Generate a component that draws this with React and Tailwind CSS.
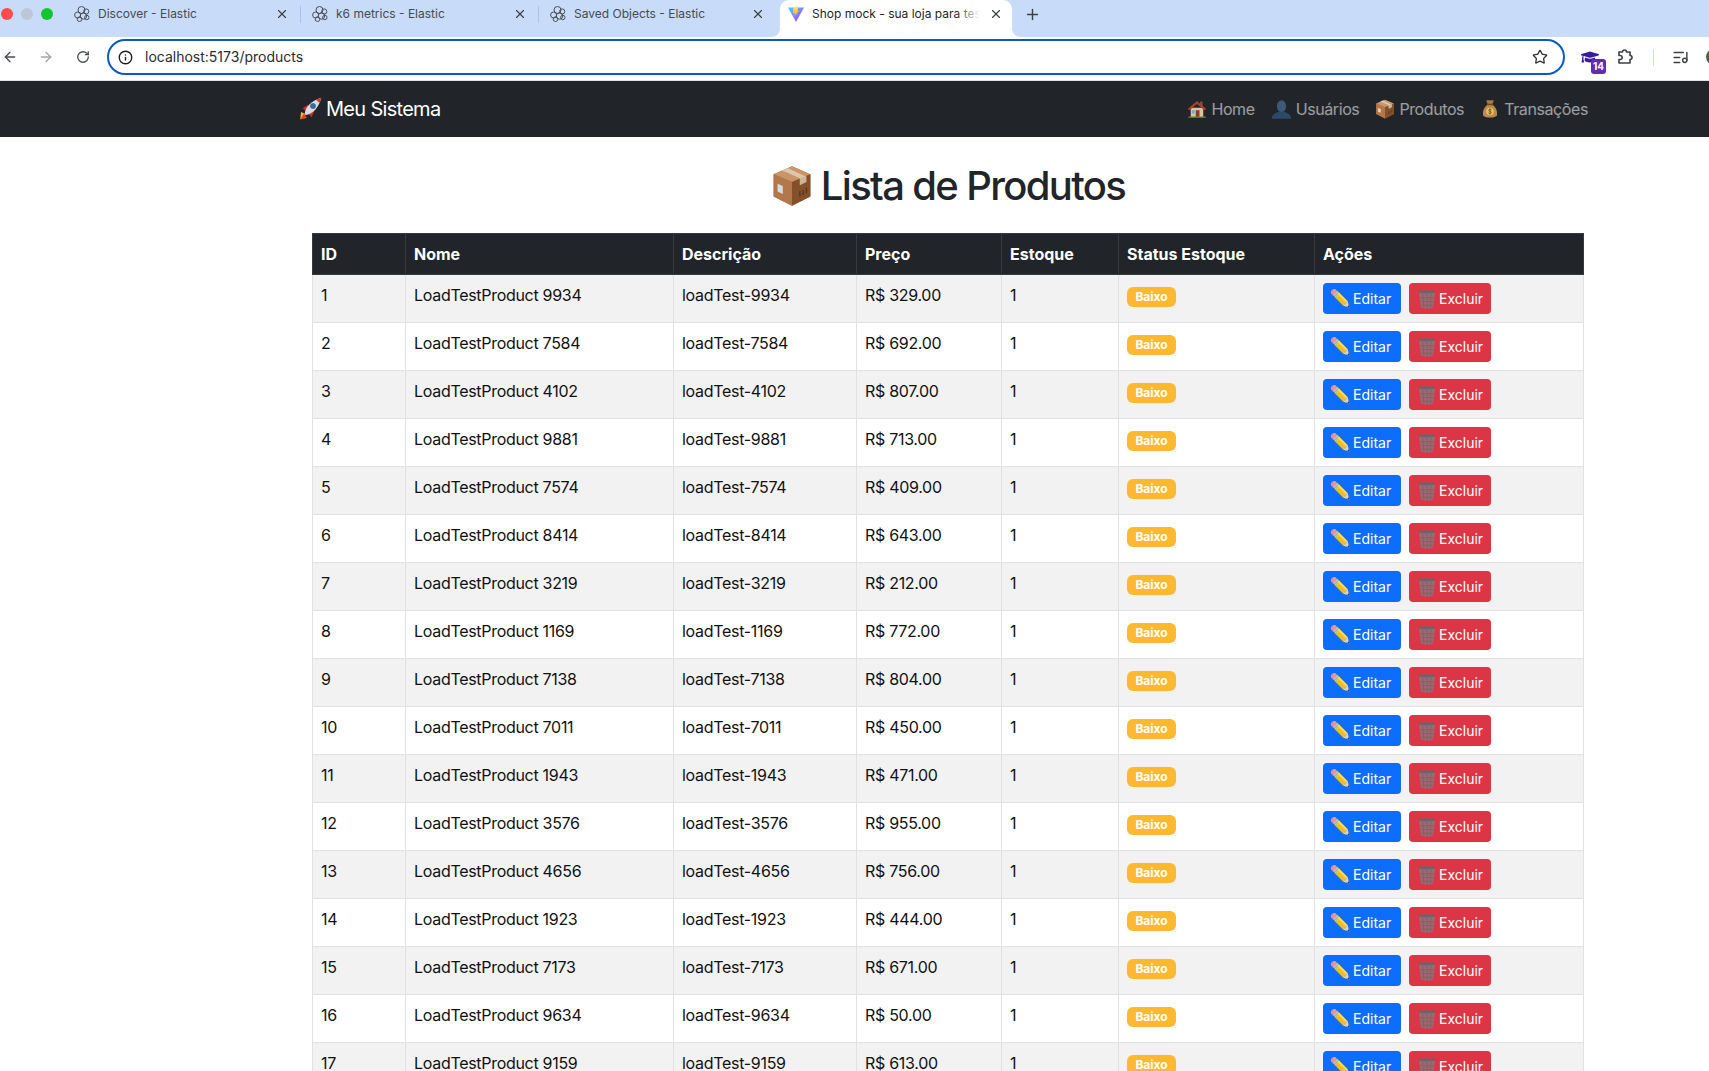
import { ArrowLeft, ArrowRight, Info, ListMusic, Plus, RotateCw, Star, X } from "lucide-react";
import { FaGraduationCap } from "react-icons/fa";

const products = [
  [1, 9934, "329.00"],
  [2, 7584, "692.00"],
  [3, 4102, "807.00"],
  [4, 9881, "713.00"],
  [5, 7574, "409.00"],
  [6, 8414, "643.00"],
  [7, 3219, "212.00"],
  [8, 1169, "772.00"],
  [9, 7138, "804.00"],
  [10, 7011, "450.00"],
  [11, 1943, "471.00"],
  [12, 3576, "955.00"],
  [13, 4656, "756.00"],
  [14, 1923, "444.00"],
  [15, 7173, "671.00"],
  [16, 9634, "50.00"],
  [17, 9159, "613.00"],
];

const headers = ["ID", "Nome", "Descrição", "Preço", "Estoque", "Status Estoque", "Ações"];

const ElasticIcon = () => (
  <svg viewBox="0 0 16 16" className="w-4 h-4 shrink-0" fill="none" stroke="#4a4f57" strokeWidth="1">
    <circle cx="7.5" cy="4" r="3.5" />
    <circle cx="12.2" cy="5.5" r="2.6" />
    <circle cx="3.6" cy="9" r="3" />
    <circle cx="9.5" cy="10" r="3.2" />
    <circle cx="5.5" cy="13.2" r="2.3" />
    <circle cx="12.8" cy="11.5" r="2.2" />
  </svg>
);

const ViteIcon = () => (
  <svg viewBox="0 0 16 16" className="w-4 h-4 shrink-0">
    <defs>
      <linearGradient id="vite-a" x1="0" y1="0" x2="1" y2="1">
        <stop offset="0" stopColor="#41d1ff" />
        <stop offset="1" stopColor="#bd34fe" />
      </linearGradient>
      <linearGradient id="vite-b" x1="0" y1="0" x2="0" y2="1">
        <stop offset="0" stopColor="#ffea83" />
        <stop offset="1" stopColor="#ffa800" />
      </linearGradient>
    </defs>
    <path d="M0 1.5 L16 1.5 L8 16 Z" fill="url(#vite-a)" />
    <path d="M10.8 0 L5.2 1.2 L5 7.5 L7 7 L6.4 10.5 L11.3 4.5 L9.3 4.9 Z" fill="url(#vite-b)" />
  </svg>
);

const PuzzleIcon = () => (
  <svg viewBox="0 0 24 24" width="19" height="19" fill="none" stroke="#3c4043" strokeWidth="2" strokeLinejoin="round" className="ml-4 shrink-0">
    <path d="M5 5h4.5a2.5 2.5 0 0 1 5 0H19v4.5a2.5 2.5 0 0 1 0 5V19H5v-4.5h1.5a2.5 2.5 0 0 0 0-5H5z" />
  </svg>
);

const RocketEmoji = () => (
  <svg viewBox="0 0 32 32" width="24" height="24" className="shrink-0 -ml-[2px]">
    <path d="M3 30 L4 20 L11 23 Z" fill="#f6b12d" />
    <path d="M3 30 L12 28 L8 22 Z" fill="#e8432e" />
    <path d="M6 15 L14 10 L12 20 Z" fill="#c9302c" />
    <path d="M18 27 L22 18 L12 20 Z" fill="#c9302c" />
    <path d="M9 22 C10 13 18 5 31 1 C28 14 20 22 11 24 Z" fill="#d4dde5" />
    <path d="M24 3.5 C26 2.5 28.5 2 31 1 C30.5 3.5 29.5 6 28.5 8 Z" fill="#d8382c" />
    <circle cx="20" cy="12" r="3.4" fill="#2c6fa8" stroke="#55606a" strokeWidth="1" />
  </svg>
);

const HouseEmoji = () => (
  <svg viewBox="0 0 32 32" width="20" height="20" className="shrink-0">
    <rect x="6" y="14" width="20" height="15" fill="#d9c39a" />
    <path d="M1 16 L16 3 L31 16 L28 18 L16 8 L4 18 Z" fill="#a5402f" />
    <rect x="21" y="4" width="4" height="7" fill="#8a4a35" />
    <rect x="14" y="18" width="6" height="11" fill="#8c3a2e" />
    <rect x="8" y="18" width="4" height="5" fill="#6fa8d6" />
    <rect x="2" y="28" width="28" height="2" fill="#5c8a3e" />
  </svg>
);

const UserEmoji = () => (
  <svg viewBox="0 0 32 32" width="21" height="21" className="shrink-0">
    <ellipse cx="16" cy="11" rx="7" ry="9" fill="#3d5a78" />
    <path d="M1 30 C2 22 9 21 12 19 L20 19 C23 21 30 22 31 30 Z" fill="#2c4a68" />
  </svg>
);

const BoxEmoji = ({ size = 20 }) => (
  <svg viewBox="0 0 32 32" width={size} height={size} className="shrink-0">
    <path d="M16 1 L30 7 L30 24 L16 31 L2 24 L2 7 Z" fill="#a5683f" />
    <path d="M16 1 L30 7 L16 13 L2 7 Z" fill="#c99467" />
    <path d="M16 13 L30 7 L30 24 L16 31 Z" fill="#84502c" />
    <path d="M2 7 L16 13 L16 31 L2 24 Z" fill="#b4774a" />
    <path d="M8 4 L22 10 L22 15 L27 9 L13 2.5 Z" fill="#dcc7a8" />
    <path d="M22 10 L27 8.5 L27 13 L22 15.5 Z" fill="#cdb595" />
    <rect x="5" y="14" width="4" height="6" fill="#d5dde0" transform="skewY(24) translate(0 -2)" />
    <path d="M22 24 L22 20 M24.5 22.8 L24.5 19 M27 21.5 L27 17.5" stroke="#56331b" strokeWidth="1" />
  </svg>
);

const MoneyEmoji = () => (
  <svg viewBox="0 0 32 32" width="20" height="20" className="shrink-0">
    <path d="M12 9 C5 14 4 22 5 26 C7 31 25 31 27 26 C28 22 27 14 20 9 Z" fill="#bc8a4e" />
    <path d="M10 2 L22 2 L20 8 L12 8 Z" fill="#a97a43" />
    <rect x="11" y="7.5" width="10" height="2.5" fill="#6d4a24" />
    <circle cx="16" cy="20" r="6" fill="#e8c15a" />
    <path d="M18.5 17.5 C17 16 13.5 16.5 14 18.5 C14.5 20.5 18.5 19.5 18 21.8 C17.5 23.5 14.5 23.5 13.5 22.2 M16 15 L16 25" stroke="#6d4a24" strokeWidth="1.3" fill="none" />
  </svg>
);

const PencilEmoji = () => (
  <svg viewBox="0 0 32 32" width="20" height="20" className="shrink-0">
    <g transform="rotate(45 16 16)">
      <rect x="-4" y="11" width="6" height="10" rx="2" fill="#f1938f" />
      <rect x="2" y="11" width="4" height="10" fill="#b8bcc2" />
      <rect x="6" y="11" width="20" height="10" fill="#f5b82e" />
      <rect x="6" y="11" width="20" height="3.5" fill="#fbd75a" />
      <path d="M26 11 L35 16 L26 21 Z" fill="#edcfa7" />
      <path d="M32 14.3 L35 16 L32 17.7 Z" fill="#333" />
    </g>
  </svg>
);

const TrashEmoji = () => (
  <svg viewBox="0 0 32 32" width="20" height="20" className="shrink-0">
    <path d="M3 5 L6 29 C8 32 24 32 26 29 L29 5 Z" fill="#9a6a70" />
    <path d="M9 8 L11 30 M16 8 L16 31 M23 8 L21 30 M5 14 L27 14 M6 20 L26 20 M7 26 L25 26" stroke="#84595f" strokeWidth="1" />
    <ellipse cx="16" cy="4.5" rx="14" ry="2.6" fill="#66666c" />
  </svg>
);

const Tab = ({ title, active, icon, noSeparator }) => (
  <div
    className={
      active
        ? "relative flex items-center w-[232px] h-[37px] mx-[3px] pl-2 pr-2 pb-[9px] bg-white rounded-t-[9px] text-[#1f1f1f]"
        : "relative flex items-center w-[238px] h-[37px] pl-[11px] pr-[11px] pb-[9px] text-[#474a50]"
    }
  >
    {icon}
    <span className="ml-2 flex-1 overflow-hidden whitespace-nowrap text-xs">{title}</span>
    <X size={14} strokeWidth={2} className="relative z-10 shrink-0 mr-px text-[#3c4043]" />
    {!active && !noSeparator && <span className="absolute right-0 top-[6px] h-[17px] w-px bg-[#a3c3f0]" />}
    {active && (
      <>
        <span className="absolute left-[176px] top-0 h-[28px] w-[34px] bg-gradient-to-r from-white/0 to-white to-70%" />
        <span className="absolute -left-2 bottom-0 w-2 h-2 bg-[radial-gradient(circle_at_0_0,#c8dcfa_7.5px,#ffffff_8px)]" />
        <span className="absolute -right-2 bottom-0 w-2 h-2 bg-[radial-gradient(circle_at_100%_0,#c8dcfa_7.5px,#ffffff_8px)]" />
      </>
    )}
  </div>
);

const BrowserChrome = () => (
  <div>
    <div className="flex items-center h-[37px] bg-[#c8dcfa] overflow-hidden">
      <div className="flex items-center gap-2 w-[63px] pl-px shrink-0 mb-[9px]">
        <span className="w-3 h-3 rounded-full bg-[#ff4b4b]" />
        <span className="w-3 h-3 rounded-full bg-[#bcc6d4]" />
        <span className="w-3 h-3 rounded-full bg-[#14c431]" />
      </div>
      <div className="flex items-center">
        <Tab title="Discover - Elastic" icon={<ElasticIcon />} />
        <Tab title="k6 metrics - Elastic" icon={<ElasticIcon />} />
        <Tab title="Saved Objects - Elastic" icon={<ElasticIcon />} noSeparator />
        <Tab title="Shop mock - sua loja para testes" icon={<ViteIcon />} active />
      </div>
      <Plus size={17} strokeWidth={2} className="ml-[9px] mb-[9px] text-[#3c4043]" />
    </div>
    <div className="flex items-center h-[43px] pb-[3px] bg-white pl-[2px] overflow-hidden">
      <ArrowLeft size={16} className="text-[#474a50] shrink-0" />
      <ArrowRight size={16} className="ml-5 text-[#a5a7ab] shrink-0" />
      <RotateCw size={14} strokeWidth={2.2} className="ml-[22px] text-[#474a50] shrink-0" />
      <div className="ml-[17px] flex items-center shrink-0 w-[1458px] h-[36px] border-2 border-[#0a5cc2] rounded-full pl-[9px] pr-[15px]">
        <Info size={15} strokeWidth={2.2} className="text-[#1f1f1f]" />
        <span className="ml-3 flex-1 text-sm text-[#2a2c30]">localhost:5173/products</span>
        <Star size={16} strokeWidth={2} className="text-[#333]" />
      </div>
      <div className="relative ml-[16px] shrink-0">
        <FaGraduationCap size={18} className="text-[#3b1a9c]" />
        <span className="absolute -right-[7px] -bottom-[8px] w-[15px] h-[15px] rounded-[3px] bg-[#5f2eb0] text-white text-[10px] leading-[15px] font-bold text-center">14</span>
      </div>
      <PuzzleIcon />
      <span className="ml-[19px] w-px h-[17px] bg-[#c8dcfa] shrink-0" />
      <ListMusic size={17} strokeWidth={2} className="ml-[18px] text-[#3c4043] shrink-0" />
      <span className="ml-[17px] w-4 h-4 rounded-full bg-[#3f6b45] shrink-0" />
    </div>
    <div className="h-px bg-[#dfe1e5]" />
  </div>
);

const NavLink = ({ icon, label }) => (
  <a className="flex items-center gap-1 px-2 py-2 text-white/55 tracking-[-0.4px]">
    {icon}
    <span>{label}</span>
  </a>
);

const App = () => {
  return (
    <div className="h-screen overflow-hidden bg-white font-[Inter,sans-serif] text-[#212529]">
      <BrowserChrome />

      {/* Navbar */}
      <nav className="h-[56px] bg-[#212529]">
        <div className="flex items-center justify-between h-full ml-[288px] w-[1320px] px-3">
          <a className="flex items-center gap-[4px] text-xl text-white tracking-[-0.7px]">
            <RocketEmoji />
            <span>Meu Sistema</span>
          </a>
          <div className="flex items-center">
            <NavLink icon={<HouseEmoji />} label="Home" />
            <NavLink icon={<UserEmoji />} label="Usuários" />
            <NavLink icon={<BoxEmoji />} label="Produtos" />
            <NavLink icon={<MoneyEmoji />} label="Transações" />
          </div>
        </div>
      </nav>

      <div className="ml-[288px] w-[1320px] px-6">
        <h1 className="flex items-center justify-center gap-[8px] mt-[25px] mb-[23px] text-[40px] leading-[48px] font-medium tracking-[-1.65px]">
          <BoxEmoji size={42} />
          <span>Lista de Produtos</span>
        </h1>

        <table className="w-[1271px] table-fixed border-collapse text-base text-[#111]">
          <colgroup>
            <col className="w-[93px]" />
            <col className="w-[268px]" />
            <col className="w-[183px]" />
            <col className="w-[145px]" />
            <col className="w-[117px]" />
            <col className="w-[196px]" />
            <col className="w-[269px]" />
          </colgroup>
          <thead className="bg-[#212529] text-white">
            <tr>
              {headers.map((h) => (
                <th key={h} className="p-2 text-left font-bold border border-[#373b3e]">
                  {h}
                </th>
              ))}
            </tr>
          </thead>
          <tbody className="tracking-[-0.3px]">
            {products.map(([id, code, price]) => (
              <tr key={id} className={id % 2 === 1 ? "bg-[#f2f2f2]" : "bg-white"}>
                <td className="p-2 align-top border border-[#dee2e6]">{id}</td>
                <td className="p-2 align-top border border-[#dee2e6]">LoadTestProduct {code}</td>
                <td className="p-2 align-top border border-[#dee2e6]">loadTest-{code}</td>
                <td className="p-2 align-top border border-[#dee2e6]">R$ {price}</td>
                <td className="p-2 align-top border border-[#dee2e6]">1</td>
                <td className="p-2 align-top border border-[#dee2e6]">
                  <span className="flex items-center justify-center mt-1 h-5 w-[49px] rounded-md bg-[#ffb92e] text-white text-xs font-bold tracking-normal">
                    Baixo
                  </span>
                </td>
                <td className="p-2 align-top border border-[#dee2e6] tracking-normal">
                  <div className="flex items-center gap-2 h-[31px]">
                    <button className="flex items-center gap-[2px] h-[31px] w-[78px] pl-2 rounded bg-[#0d6efd] text-white text-sm">
                      <PencilEmoji />
                      <span>Editar</span>
                    </button>
                    <button className="flex items-center gap-[2px] h-[31px] w-[82px] pl-2 rounded bg-[#dc3545] text-white text-sm">
                      <TrashEmoji />
                      <span>Excluir</span>
                    </button>
                  </div>
                </td>
              </tr>
            ))}
          </tbody>
        </table>
      </div>
    </div>
  );
};

export default App;
